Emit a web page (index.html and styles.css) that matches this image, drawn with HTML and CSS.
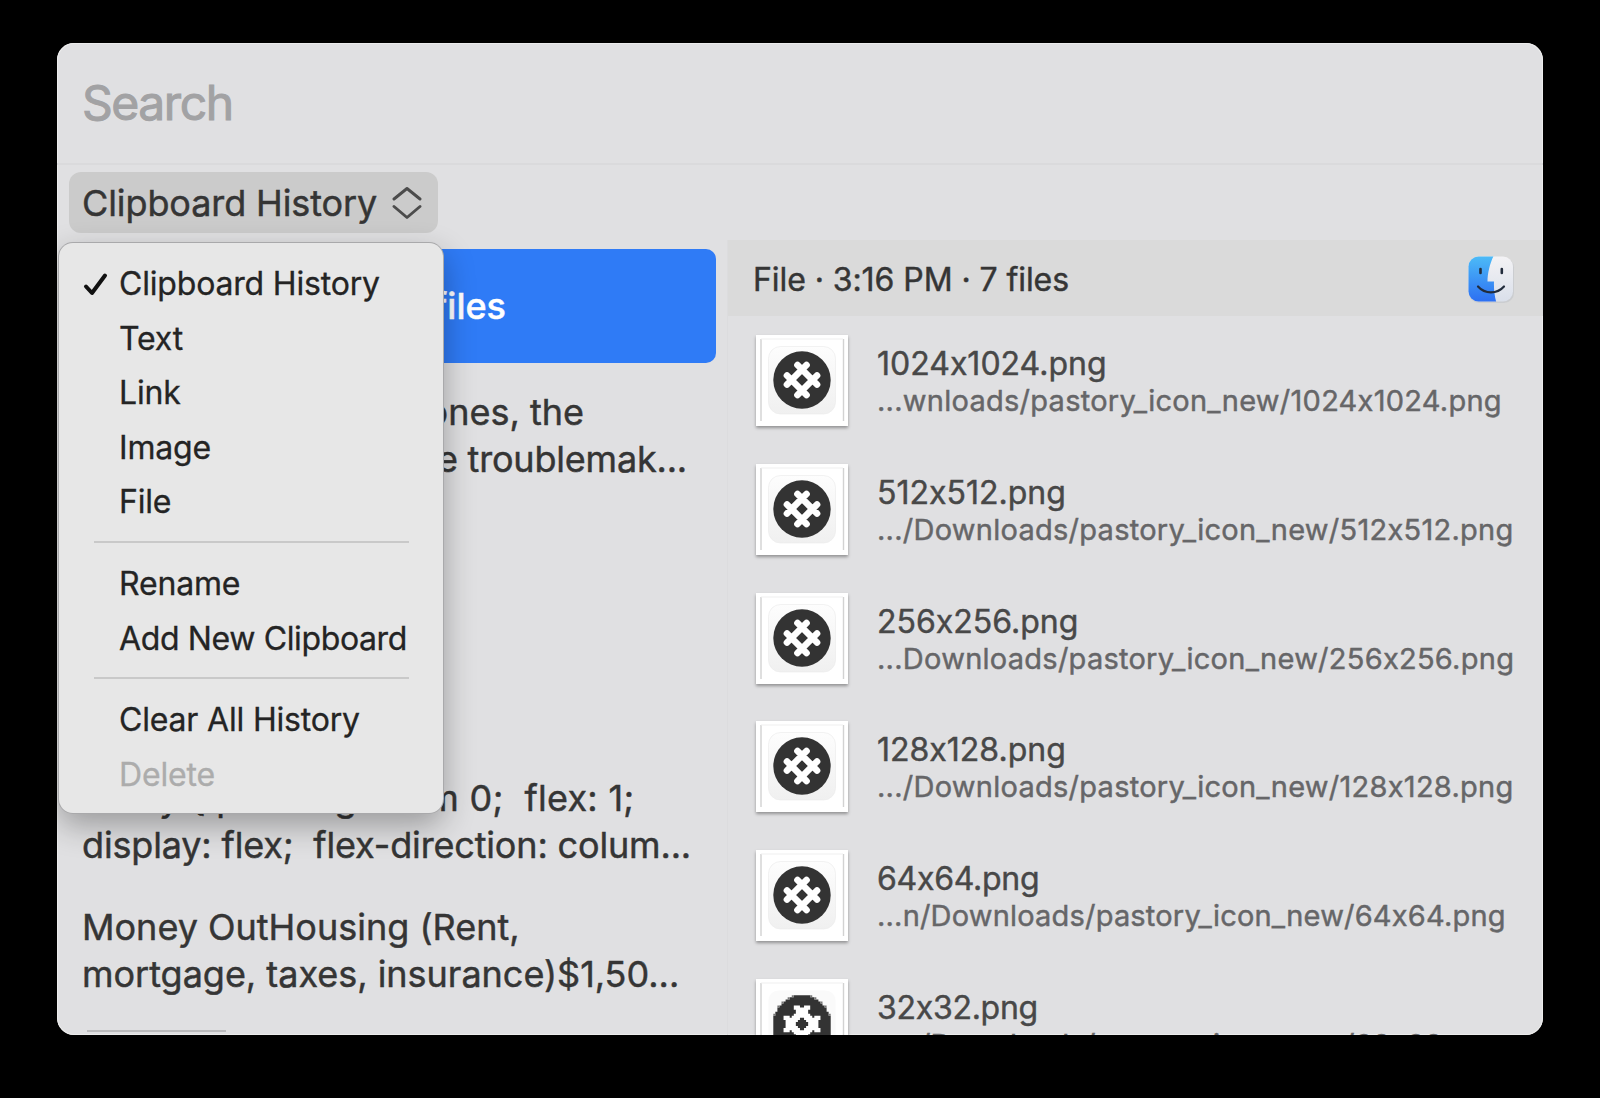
FILE: index.html
```html
<!DOCTYPE html>
<html lang="en">
<head>
<meta charset="utf-8">
<title>Clipboard History</title>
<link rel="stylesheet" href="styles.css">
</head>
<body>
<svg width="0" height="0" class="defs" aria-hidden="true">
  <defs>
    <linearGradient id="tile" x1="0" y1="0" x2="0" y2="1"><stop offset="0" stop-color="#fdfdfd"/><stop offset="1" stop-color="#f0f0f0"/></linearGradient>
    <g id="hash" stroke="#fff" stroke-width="6.7" stroke-linecap="round">
      <path d="M-4.500-15L15 4.500M-15-4.500L4.500 15M4.500-15L-15 4.500M15-4.500L-4.500 15"/>
    </g>
    <g id="frame">
      <path d="M-41 41V-41M41.500 41V-41" stroke="#d2d2d2" stroke-width="1.4"/>
      <path d="M-41-41H41" stroke="#f0f0f0" stroke-width="1.2"/>
    </g>
    <symbol id="logo" viewBox="-45.500 -45 91 91">
      <use href="#frame"/>
      <rect x="-33.5" y="-33.5" width="67" height="67.500" rx="12" fill="url(#tile)" stroke="#ececec" stroke-width=".7"/>
      <circle r="28.700" fill="#333"/>
      <use href="#hash"/>
    </symbol>
    <!-- low resolution version, drawn on a coarse pixel grid -->
    <symbol id="logo-32" viewBox="-45.500 -45 91 91">
      <use href="#frame"/>
      <rect x="-33.5" y="-33.5" width="67" height="67" rx="10" fill="#fafafa"/>
      <g transform="scale(2.05)">
        <path fill="#333" d="M-4-14H4V-13H6V-12H8V-11H9V-10H10V-9H11V-8H12V-6H13V-4H14V14H-14V-4H-13V-6H-12V-8H-11V-9H-10V-10H-9V-11H-8V-12H-6V-13H-4Z"/>
        <path fill="#777" d="M-5-14h1v1h-1zM4-14h1v1h-1zM-7-13h1v1h-1zM6-13h1v1h-1zM-10-11h1v1h-1zM9-11h1v1h-1zM-12-9h1v1h-1zM11-9h1v1h-1zM-14-5h1v1h-1zM13-5h1v1h-1z"/>
        <path fill="#fff" fill-rule="evenodd" d="M-4-9H-1V-8H1V-9H4V-7H3V-5H4V-4H5V-3H6V-4H9V-2H8V2H9V4H6V3H5V4H4V5H3V7H4V9H1V8H-1V9H-4V7H-3V5H-4V4H-5V3H-6V4H-9V2H-8V-2H-9V-4H-6V-3H-5V-4H-4V-5H-3V-7H-4ZM-1-3V-2H-2V-1H-3V1H-2V2H-1V3H1V2H2V1H3V-1H2V-2H1V-3Z"/>
      </g>
    </symbol>
  </defs>
</svg>
<main class="window">
  <header class="search">Search</header>
  <div class="toolbar">
    <div class="picker-wrap">
      <button class="picker"><span>Clipboard History</span>
        <svg width="30" height="34" viewBox="0 0 30 34" fill="none" stroke="#4c4c4c" stroke-width="2.900" stroke-linecap="round" stroke-linejoin="round"><path d="M2 13L15 2.500L28 13M2 20.500L15 31.500L28 20.500"/></svg>
      </button>
      <div class="menu">
        <div class="item checked">
          <svg class="check" width="26" height="26" viewBox="0 0 26 26" fill="none" stroke="#111" stroke-width="4" stroke-linecap="round" stroke-linejoin="round"><path d="M4 15.500L10 22L23 4.500"/></svg>
          Clipboard History</div>
        <div class="item">Text</div>
        <div class="item">Link</div>
        <div class="item">Image</div>
        <div class="item">File</div>
        <div class="sep"></div>
        <div class="item">Rename</div>
        <div class="item add">Add New Clipboard</div>
        <div class="sep"></div>
        <div class="item">Clear All History</div>
        <div class="item disabled">Delete</div>
      </div>
    </div>
  </div>
  <div class="body">
    <section class="clips">
      <div class="clip selected"><span class="tail t1">files</span></div>
      <div class="clip"><span class="tail t2">ones, the</span><span class="tail t3">the troublemak...</span></div>
      <div class="clip"></div>
      <div class="clip"></div>
      <div class="clip"><span class="c1">.body { padding: 1rem 0;  flex: 1;</span><span class="c2">display: flex;  flex-direction: colum...</span></div>
      <div class="clip"><span class="c3">Money OutHousing (Rent,</span><span class="c4">mortgage, taxes, insurance)$1,50...</span></div>
      <div class="clip next"><i class="edge"></i></div>
    </section>
    <section class="preview">
      <div class="info"><span>File · 3:16 PM · 7 files</span>
        <svg width="48" height="48" viewBox="0 0 48 48">
          <defs>
            <linearGradient id="fb" x1="0" y1="0" x2="0" y2="1"><stop offset="0" stop-color="#4dbdf7"/><stop offset="1" stop-color="#2c6df2"/></linearGradient>
            <linearGradient id="fw" x1="0" y1="0" x2="0" y2="1"><stop offset="0" stop-color="#f4f3f5"/><stop offset="1" stop-color="#d9dfea"/></linearGradient>
            <clipPath id="fc"><rect x="1.500" y="1.500" width="44.500" height="45" rx="10"/></clipPath>
          </defs>
          <rect x="2" y="2.500" width="45" height="45.500" rx="10" fill="#cbcdd0"/>
          <g clip-path="url(#fc)">
            <rect width="48" height="48" fill="url(#fw)"/>
            <path d="M0 0H27C23 8 20.500 18 20.500 26.500H27C26.700 34 27.500 41 29.500 48H0Z" fill="url(#fb)"/>
          </g>
          <path d="M13.500 14V18M34.800 14V18" stroke="#222c3c" stroke-width="2.600" stroke-linecap="round"/>
          <path d="M11 31.500C18 39.300 30 39.300 37 31.500" fill="none" stroke="#222c3c" stroke-width="2.200" stroke-linecap="round"/>
        </svg>
      </div>
      <div class="files">
        <div class="file"><svg class="thumb"><use href="#logo"/></svg><div><b>1024x1024.png</b><small>...wnloads/pastory_icon_new/1024x1024.png</small></div></div>
        <div class="file"><svg class="thumb"><use href="#logo"/></svg><div><b>512x512.png</b><small>.../Downloads/pastory_icon_new/512x512.png</small></div></div>
        <div class="file"><svg class="thumb"><use href="#logo"/></svg><div><b>256x256.png</b><small>...Downloads/pastory_icon_new/256x256.png</small></div></div>
        <div class="file"><svg class="thumb"><use href="#logo"/></svg><div><b>128x128.png</b><small>.../Downloads/pastory_icon_new/128x128.png</small></div></div>
        <div class="file"><svg class="thumb"><use href="#logo"/></svg><div><b class="tight">64x64.png</b><small class="tight">...n/Downloads/pastory_icon_new/64x64.png</small></div></div>
        <div class="file"><svg class="thumb"><use href="#logo-32"/></svg><div><b class="tight">32x32.png</b><small class="tight">...n/Downloads/pastory_icon_new/32x32.png</small></div></div>
      </div>
    </section>
  </div>
</main>
</body>
</html>
```
FILE: styles.css
```css
* { box-sizing: border-box; }
body { margin: 0; padding: 43px 57px; height: 1098px; overflow: hidden; background: #000; font-family: Inter, "Liberation Sans", sans-serif; -webkit-text-stroke: .45px currentColor; font-feature-settings: "calt" 0; color: #353535; }
.defs { position: absolute; }
.window { display: flex; flex-direction: column; width: 1486px; height: 992px; overflow: hidden; border-radius: 17px; background: #e0e0e2; box-shadow: inset 0 0 0 1px #ececec; }
.search { height: 122px; padding: 0 25px; border-bottom: 2px solid #dadadc; font-size: 48px; line-height: 120px; color: #a2a2a4; letter-spacing: -1.450px; -webkit-text-stroke-width: 1px; }
.toolbar { height: 75px; padding: 7px 12px; }
.picker-wrap { position: relative; width: 369px; }
.picker { display: flex; align-items: center; justify-content: space-between; width: 369px; height: 61px; padding: 0 16px 0 13px; border: 0; border-radius: 12px; background: #cbcbcb; color: #353535; font: inherit; font-size: 36px; letter-spacing: -.100px; white-space: nowrap; }
.menu { position: absolute; z-index: 2; left: -10px; top: 71px; width: 384px; height: 570px; padding: 13.500px 0; border-radius: 14px; background: #e7e7e7; box-shadow: 0 0 0 1px #a9a9ab, 0 12px 32px rgba(0,0,0,.32); }
.item { display: flex; align-items: center; height: 54.500px; padding-left: 60px; font-size: 32px; letter-spacing: -.180px; color: #242424; white-space: nowrap; -webkit-text-stroke-width: .3px; }
.add { letter-spacing: -.370px; }
.checked { padding-left: 23px; gap: 11px; }
.check { flex: none; }
.disabled { color: #acacac; }
.sep { display: flex; height: 27.300px; padding-bottom: 2px; margin: 0 34px 0 35px; align-items: center; }
.sep::before { content: ""; width: 100%; height: 2px; background: #c9c9c9; }
.body { display: flex; flex: 1; min-height: 0; }
.clips { width: 671px; padding: 9px 12px 0; overflow: hidden; border-right: 1px solid #dcdcde; }
.clip { display: flex; flex-direction: column; justify-content: center; width: 647px; height: 114px; margin-bottom: 14.800px; padding: 2px 0 0 13px; border-radius: 10px; font-size: 36px; line-height: 47px; white-space: pre; }
.selected { padding-top: 1px; background: #2f7bf6; color: #fff; font-weight: 500; }
.tail { text-align: right; }
.t1 { width: 424px; }
.t2 { width: 502px; }
.t3 { width: 605px; letter-spacing: -.200px; }
.c1 { letter-spacing: .270px; }
.c2 { letter-spacing: -.160px; }
.c3 { letter-spacing: 0; }
.c4 { letter-spacing: -.020px; }
.next { justify-content: flex-start; }
.edge { width: 139px; height: 2px; margin: 6px 0 0 5px; background: #bbbbbd; }
.preview { flex: 1; overflow: hidden; }
.info { display: flex; align-items: center; justify-content: space-between; height: 76px; padding: 2px 28px 0 25px; background: #dadada; font-size: 32px; letter-spacing: -.070px; white-space: nowrap; }
.files { padding: 19px 0 0 28px; }
.file { display: flex; gap: 29px; height: 128.800px; }
.thumb { flex: none; width: 92px; height: 91px; background: #fff; box-shadow: 0 2px 3px rgba(0,0,0,.35); }
.file b, .file small { display: block; font-weight: 400; white-space: nowrap; }
.file b { margin-top: 9px; font-size: 32px; line-height: 40px; letter-spacing: 0; color: #484848; }
.file small { margin-top: -1px; font-size: 29px; line-height: 36px; letter-spacing: .260px; color: #666668; }
.file b.tight { letter-spacing: -.280px; }
.file small.tight { letter-spacing: .190px; }
```
